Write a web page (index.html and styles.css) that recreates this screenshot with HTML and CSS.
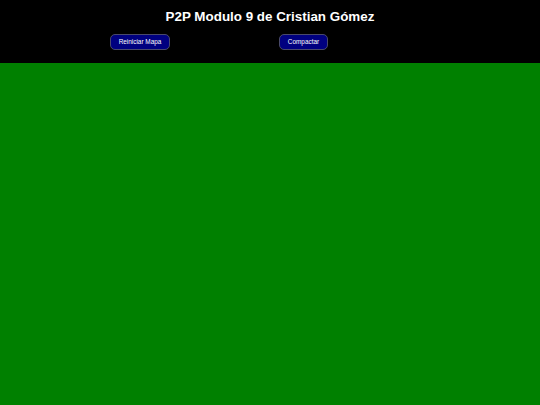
FILE: index.html
```html
<!DOCTYPE html>
<html>
<head>
<meta charset="utf-8">
<link rel="stylesheet" href="styles.css">
</head>
<body>
<header class="top">
  <h1 class="title">P2P Modulo 9 de Cristian Gómez</h1>
  <div class="controls">
    <button class="btn btn-reset">Reiniciar Mapa</button>
    <button class="btn btn-compact">Compactar</button>
  </div>
</header>
<main class="map"></main>
</body>
</html>
```
FILE: styles.css
```css
html, body {
  margin: 0;
  padding: 0;
  height: 100%;
}
body {
  font-family: "Liberation Sans", Arial, sans-serif;
  background: #008000;
  display: flex;
  flex-direction: column;
}
.top {
  background: #000;
  height: 63px;
  box-sizing: border-box;
  padding-top: 8px;
}
.title {
  margin: 0;
  color: #fff;
  font-size: 13.4px;
  font-weight: bold;
  text-align: center;
  line-height: 17px;
}
.controls {
  display: flex;
  padding-left: 110px;
  gap: 109px;
  margin-top: 9px;
}
.btn {
  background: #000080;
  color: #fff;
  border: 1px solid #4a4a6a;
  border-radius: 5px;
  font-family: "Liberation Sans", Arial, sans-serif;
  font-size: 6.4px;
  height: 16px;
  padding: 0;
  line-height: 14px;
  box-sizing: border-box;
  text-align: center;
}
.btn-reset {
  width: 60px;
}
.btn-compact {
  width: 49px;
}
.map {
  flex: 1;
  background: #008000;
}
```
